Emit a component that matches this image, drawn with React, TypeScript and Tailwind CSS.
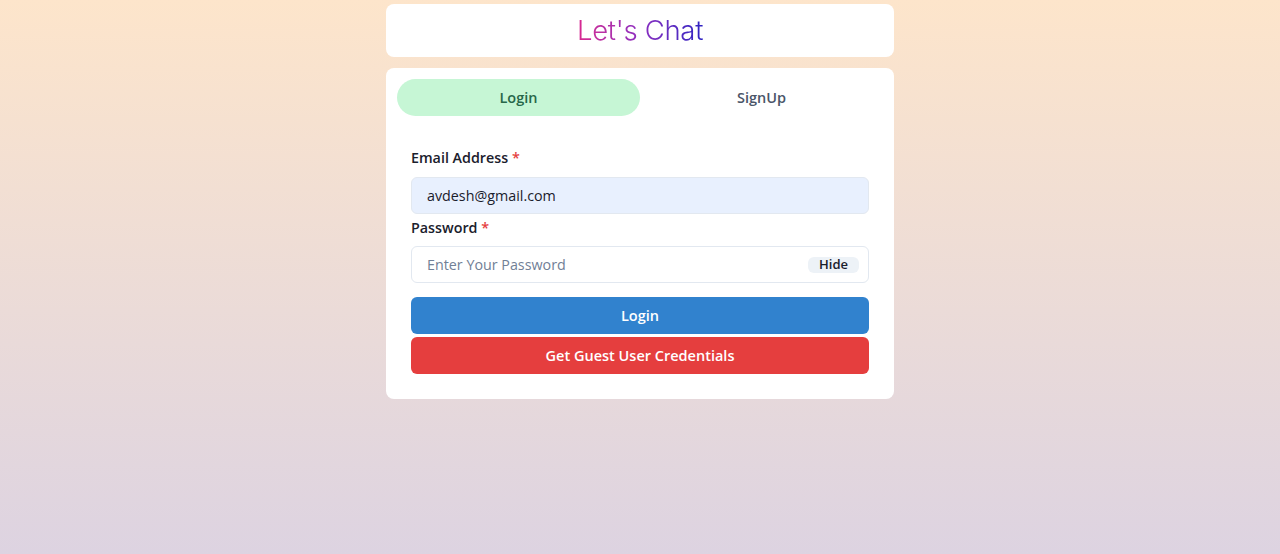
import React from "react";

export default function App() {
  return (
    <div
      className="w-full h-[554px] bg-gradient-to-b from-[#fde5cb] to-[#ddd3e1] flex flex-col items-center"
      style={{ fontFamily: '"Open Sans", "Noto Sans", sans-serif' }}
    >
      <div className="mt-[4px] w-[508px] h-[53px] bg-white rounded-lg flex items-center justify-center">
        <span
          className="text-[27.5px] leading-none bg-gradient-to-r from-[#d9268f] via-[#8d2bc0] to-[#2d21c2] bg-clip-text text-transparent tracking-[-0.3px]"
          style={{ fontFamily: 'Inter, "Noto Sans", sans-serif', fontWeight: 350 }}
        >
          Let's Chat
        </span>
      </div>
      <div className="mt-[11px] w-[508px] bg-white rounded-lg px-[11px] pt-[11px] pb-[25px]">
        <div className="flex">
          <div className="flex-1 h-[37px] rounded-full bg-[#c6f6d5] text-[#276749] font-semibold text-[14.5px] flex items-center justify-center">
            Login
          </div>
          <div className="flex-1 h-[37px] rounded-full text-[#4a5568] font-semibold text-[14.5px] flex items-center justify-center">
            SignUp
          </div>
        </div>
        <div className="px-[14px] pt-[32px] flex flex-col">
          <label className="text-[14.3px] font-semibold text-[#1a202c] leading-[20px] mb-[9px]">
            Email Address <span className="text-[#e53e3e]">*</span>
          </label>
          <div className="h-[37px] rounded-md bg-[#e8f0fe] border border-[#e2e8f0] px-[15px] flex items-center text-[14.3px] text-[#1a202c]">
            avdesh@gmail.com
          </div>
          <label className="mt-[4px] text-[14.3px] font-semibold text-[#1a202c] leading-[20px] mb-[8px]">
            Password <span className="text-[#e53e3e]">*</span>
          </label>
          <div className="h-[37px] rounded-md bg-white border border-[#e2e8f0] pl-[15px] pr-[9px] flex items-center justify-between text-[14.3px]">
            <span className="text-[#718096]">Enter Your Password</span>
            <span className="h-[16px] px-[11px] rounded-md bg-[#edf2f7] text-[13px] font-semibold text-[#1a202c] flex items-center">
              Hide
            </span>
          </div>
          <div className="mt-[14px] h-[37px] rounded-md bg-[#3182ce] text-white font-semibold text-[14.5px] flex items-center justify-center">
            Login
          </div>
          <div className="mt-[3px] h-[37px] rounded-md bg-[#e53e3e] text-white font-semibold text-[14.5px] flex items-center justify-center">
            Get Guest User Credentials
          </div>
        </div>
      </div>
    </div>
  );
}
